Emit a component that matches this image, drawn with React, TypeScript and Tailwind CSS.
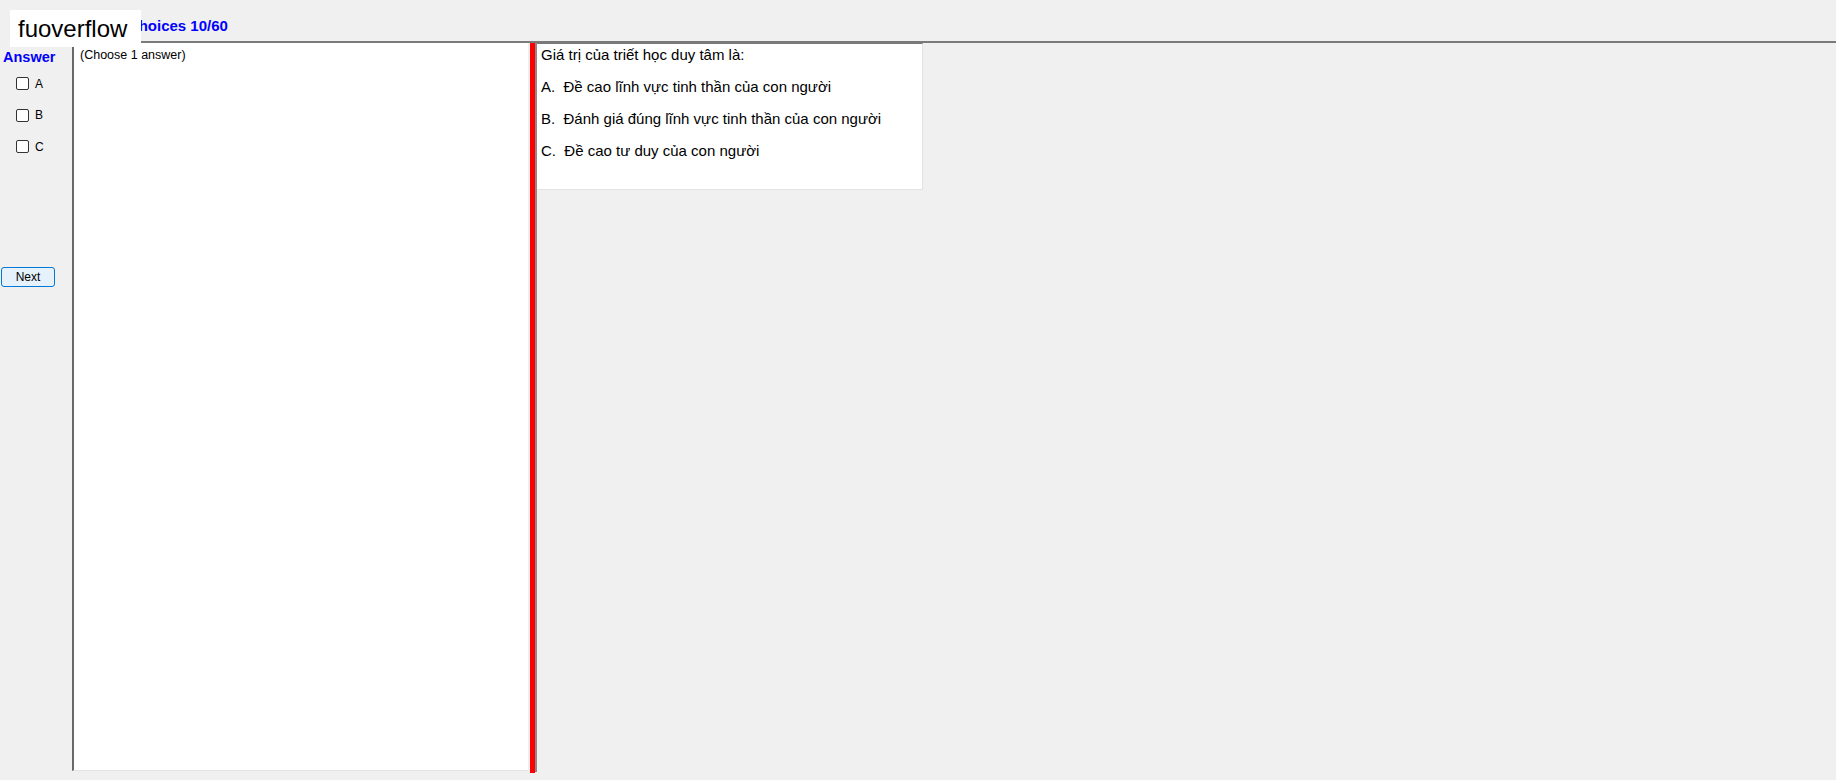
const answers = ["A", "B", "C"];

const options = [
  "A.  Đề cao lĩnh vực tinh thần của con người",
  "B.  Đánh giá đúng lĩnh vực tinh thần của con người",
  "C.  Đề cao tư duy của con người",
];

function CheckRow({ label }: { label: string }) {
  return (
    <label className="flex h-[13px] items-center gap-[6px] pl-[16px]">
      <span className="h-[13px] w-[13px] rounded-[2px] border border-[#333333] bg-white" />
      <span className="text-[12px] leading-none text-black">{label}</span>
    </label>
  );
}

export default function App() {
  return (
    <div
      className="relative flex h-[780px] w-[1836px] flex-col overflow-hidden bg-[#f0f0f0]"
      style={{ fontFamily: '"Liberation Sans", Arial, sans-serif' }}
    >
      {/* logo badge over the title */}
      <div className="absolute left-[10px] top-[10px] flex h-[37px] w-[131px] items-center bg-white pl-[8px] text-[24px] leading-none text-black">
        fuoverflow
      </div>

      {/* title bar */}
      <div className="flex h-[41px] shrink-0 items-center pl-[67px] pt-[9px]">
        <span className="text-[15px] font-bold leading-[17px] text-[#0000ff]">
          Multiple Choices 10/60
        </span>
      </div>

      <div className="flex h-[730px] shrink-0">
        {/* answer sheet */}
        <div className="flex w-[72px] shrink-0 flex-col">
          <div className="pl-[3px] pt-[8px] text-[14.5px] font-bold leading-[16px] text-[#0000ff]">
            Answer
          </div>
          <div className="mt-[12px] flex flex-col gap-[18.5px]">
            {answers.map((a) => (
              <CheckRow key={a} label={a} />
            ))}
          </div>
          <button className="ml-[1px] mt-[114px] flex h-[20px] w-[54px] items-center justify-center rounded-[3px] border border-[#0078d7] bg-[#e5f1fb] text-[12px] leading-none text-black">
            Next
          </button>
        </div>

        {/* work area */}
        <div className="flex flex-1 flex-col border-t-2 border-[#7a7a7a]">
          <div className="flex h-[730px]">
            <div className="h-[728px] w-[456px] border-b border-l-2 border-b-[#e3e3e3] border-l-[#696969] bg-white pl-[6px] pt-[5px] text-[12.5px] leading-[15px] text-black">
              (Choose 1 answer)
            </div>
            <div className="w-[2px]" />
            <div className="h-[730px] w-[5px] bg-[#ff0000]" />
            <div className="flex h-[729px] flex-col border-l-2 border-[#8a8a8a]">
              <div className="flex h-[147px] w-[386px] flex-col gap-[15px] border-b border-r border-t border-[#e3e3e3] border-t-[#7a7a7a] bg-white pl-[4px] pt-[2px] text-[15px] leading-[17px] text-black">
                <div>Giá trị của triết học duy tâm là:</div>
                {options.map((o) => (
                  <div key={o} className="whitespace-pre">
                    {o}
                  </div>
                ))}
              </div>
            </div>
          </div>
        </div>
      </div>
    </div>
  );
}
